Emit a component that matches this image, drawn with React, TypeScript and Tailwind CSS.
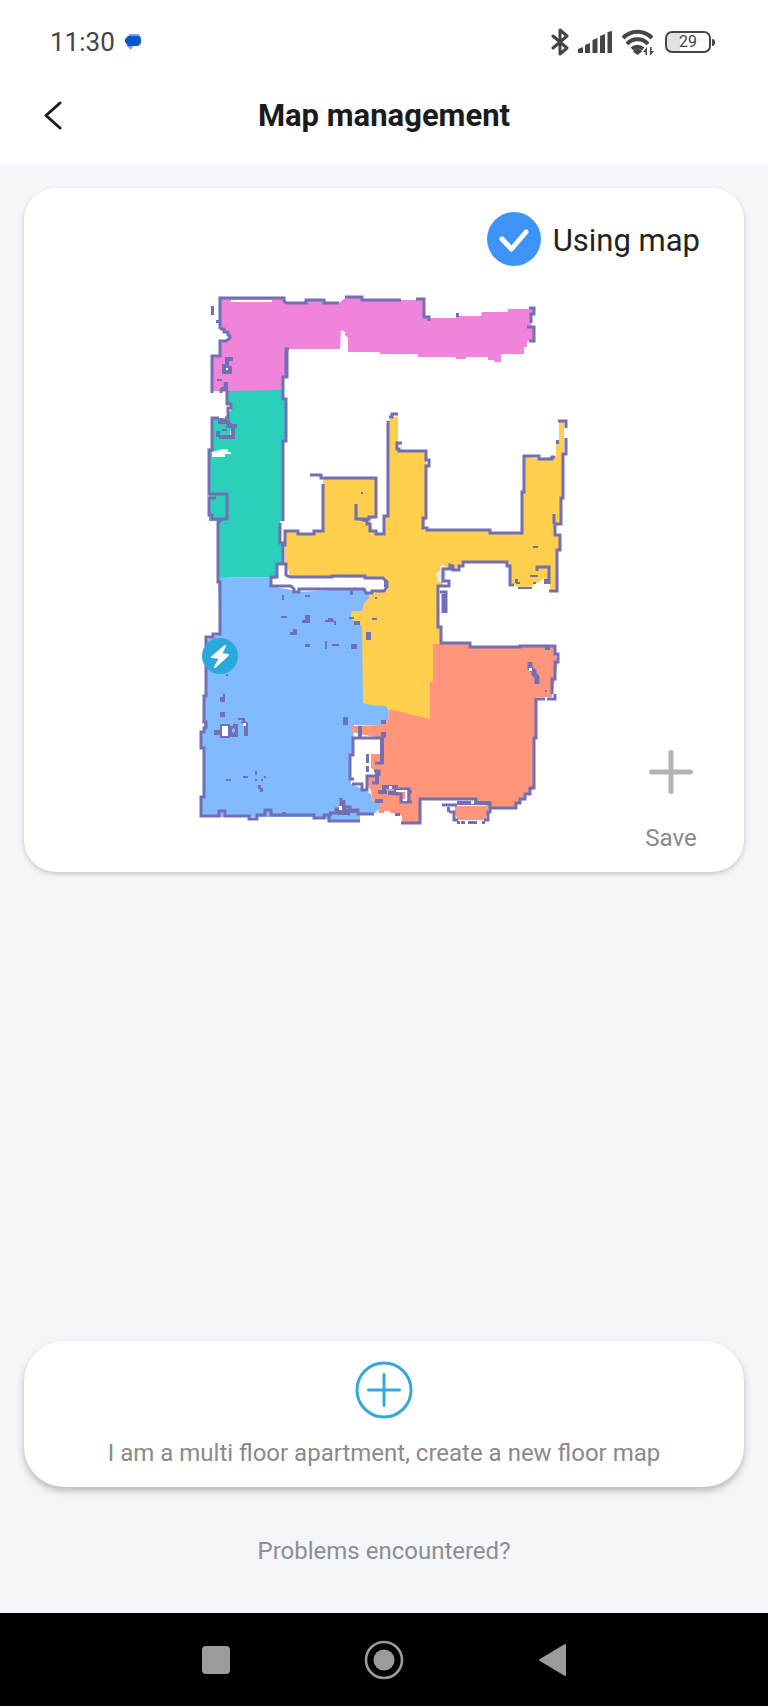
import { useState } from "react";

const WALL = "#736fb4";

// Small obstacles on the floor plan: x, y, width, height
const obstacles: number[][] = [
  // hallway
  [211, 306, 3, 9],
  [216, 320, 4, 3],
  [217, 379, 5, 2],
  [456, 313, 3, 4],
  // corridor
  [218, 420, 12, 4],
  [226, 423, 6, 5],
  [230, 424, 7, 4],
  [216, 431, 4, 6],
  [222, 429, 5, 2],
  [219, 435, 12, 4],
  // kitchen
  [361, 492, 2, 2],
  [556, 440, 3, 4],
  [533, 546, 5, 2],
  [530, 575, 8, 2],
  [533, 582, 3, 2],
  [515, 579, 3, 4],
  [516, 582, 4, 2],
  [518, 587, 14, 2],
  [544, 579, 5, 5],
  [366, 632, 5, 8],
  [372, 618, 5, 2],
  [375, 597, 2, 2],
  // living room
  [282, 595, 2, 5],
  [305, 595, 5, 2],
  [281, 616, 6, 2],
  [305, 615, 5, 7],
  [302, 620, 8, 3],
  [325, 620, 9, 2],
  [328, 618, 5, 3],
  [334, 621, 2, 4],
  [350, 591, 3, 4],
  [293, 629, 4, 5],
  [290, 632, 7, 3],
  [305, 644, 5, 3],
  [325, 641, 2, 8],
  [332, 644, 7, 2],
  [349, 617, 5, 2],
  [354, 621, 6, 4],
  [351, 644, 6, 5],
  [226, 674, 2, 2],
  [220, 697, 5, 5],
  [223, 694, 2, 3],
  [220, 712, 5, 5],
  [214, 730, 6, 5],
  [238, 718, 7, 2],
  [226, 779, 5, 2],
  [243, 776, 5, 2],
  [255, 771, 2, 4],
  [255, 779, 2, 2],
  [261, 779, 2, 2],
  [264, 776, 2, 2],
  [258, 785, 3, 4],
  [260, 788, 3, 4],
  [343, 717, 5, 8],
  [282, 812, 4, 3],
  // bedroom
  [381, 720, 5, 4],
  [381, 732, 5, 6],
  [358, 726, 4, 12],
  [366, 754, 3, 9],
  [366, 766, 3, 6],
  [375, 799, 8, 4],
  [395, 813, 5, 3],
  [545, 646, 5, 4],
  [545, 690, 2, 2],
  [447, 807, 3, 5],
  [457, 821, 3, 3],
  [461, 821, 4, 3],
  [468, 821, 9, 3],
  [482, 821, 3, 3],
];

function FloorMap() {
  return (
    <svg
      viewBox="189 290 390 564"
      className="w-full"
      role="img"
      aria-label="Floor map"
    >
      {/* rooms */}
      <path
        fill="#f083da"
        d="M220 298H284L288 303H306V301H324V303H339L345 298H362V300H424V318H456V316H481L482 312H508V309H534V315H531V326H534V341H527V347H524V354H501V362H494V360H488V357H466V359H456V357H418V354H380V352H348V338L345 335V332L341 330L340 349H287V377H283V391H212V357H220V342L228 340V332L220 329Z"
      />
      <path
        fill="#2bd0bb"
        d="M228 391L283 390V399H286V441H283V521H280V543H283V563H277V577L217 578V521H209V450H212V418H228V411H231V404H228Z"
      />
      <path
        fill="#ffcf4d"
        d="M285 531H298V534H314V531H323V478H376V517L370 520L373 531L384 536V516H388V421L393 417H398V451H426V518L424 530H490V533H522V492H524V456L539 459L556 456V441H559V421H564V455L561 524H555L556 536H560V550H557V591H550V582H544V578L538 583H533V587H518L514 585L510 583V566L505 562H463L453 571L443 566V586H438V627H441V644L433 645V682H430V720L402 714L388 709H370L355 703V622H348V612L358 608L367 594L388 590L385 578L285 577Z"
      />
      <path
        fill="#82baff"
        d="M218 578L277 577L271 586L291 588L297 592L350 589L364 589L369 595V598L364 603L362 611H352L350 618L357 623L362 626L363 703L371 705L386 706L389 711L388 720L380 725H354L352 784L364 790L371 794L373 802H380V808L374 814H360V820H329L316 817H201V798H204V749H201V733H204V698H206V640L220 634Z"
      />
      <path
        fill="#ff957a"
        d="M433 644H470V647H555V654L558 662L555 679L552 697H536V738H534V788L516 804V808H490L476 800H420V823H402V816L396 813H390V811H384V813H378L380 803L373 802L371 791L365 780L371 766V754H380V738L360 734L351 732V726L380 725L388 720L389 709L430 719V682H433Z"
      />
      <path fill="#ff957a" d="M455 806H488V813L485 820H458L455 814Z" />

      {/* unexplored gaps */}
      <g fill="#fff">
        <path d="M231 300H272V302H231Z" />
        <path d="M212 452L223 449H228V452H231V454H225V457H212Z" />
        <path d="M216 431H219V437H216ZM230 431H232V437H230ZM224 367H229V371H224Z" />
        <path d="M353 738H380V753H371V768L375 770V776H368V789H362L361 784H351V756H353Z" />
        <path d="M271 579H277V564H287L290 578H383L387 587L372 594L364 589L297 591L271 586Z" />
      </g>
      <path fill="#e9e9ec" d="M440 565L446 566V582L438 582L436 574L440 570Z" />

      {/* walls */}
      <g fill="none" stroke={WALL} strokeWidth="3">
        <path d="M286 377V349H289M220 329V298H284V301L286 303H306V300H324V303H339M345 297H362V300H401M416 299H424V317H429V321M529 308H534V314H531V323M527 327H534V341H529" />
        <path d="M220 329L224 329V332H228V335L230 336V338L226 341H220V356H212V393M221 393V390H225V383M227 390V404H231V408H228V418H225M287 349V377H283V399H286V441H283V521M280 523V543H283V563" />
        <path d="M219 418H212V450H209V494H227V519H212V515H209V498H216M222 520L218 522V582H220V634H213V637H206V696H204V722H206V728H204V732H201V748H204V797H201V816H219V811H225V816H249V819H257V815H265V810H271V815H314V818H324V815H332" />
        <path d="M310 475H321V478H376V517H369V519H356V504M360 519L367 521V524H370V531H376V534H384V516H388V421M389 417H392V414H398M323 484V531H314V534H298V531H285V545H281" />
        <path d="M402 443H397V449H399V451H426V460H429V466H426V518H423V528H427V530H490V533H522V492H524V456H539V459H552V457H555M558 421H566V428M566 438V454H563V498H561V524H555V535H560V550H557V591H549M554 514V524M549 584V567H537V571" />
        <path d="M514 585H510V566H507V562H463V566H459V570H453V566L450 565V569H443V581H449V586H438V627H441V643H470V647H520V646H555V654H558V662H555V679H552V694M547 699H555V694M545 699H536V738H534V788H530V794H525V799H520V803H516V808H490V803H476V799H420V823H401" />
        <path d="M440 592H446V613M443 613V594" />
        <path d="M271 578V586H291L294 589V592H299V589H364L366 593H372V591H384L387 587V582L383 578H365V576H332V577H290L286 575V564H277V577H271Z" />
        <path d="M383 738H353V755H350V779H354M352 784H362V790H367V776H377V783H372M375 763H383M374 771H379V776" />
        <path d="M329 813H336V809H341V798M344 800V807H350V810H358V814H374M329 814V821H360M337 814H350" />
        <path d="M395 794H401V802H412M394 789H409V801M409 792H412" />
        <path d="M442 805H457M449 812H454V820H458M490 802V812H488V820H484" />
      </g>
      <g fill="none" stroke={WALL} strokeWidth="4">
        <path d="M233 359H227V366H224V372H230V366M226 382V390M221 389H227" />
        <path d="M233 427V437H222M219 420L228 422" />
        <path d="M530 662V668L534 671V674L537 677V684" strokeWidth="5" />
        <path d="M242 721L246 724V736M233 726H236V735H231V726" />
        <path d="M382 738V764M377 772V784M378 792H387M384 791V787H396V793H388" />
        <path d="M457 803H490M336 811H358M344 806V811M386 587V580" />
      </g>
      <rect x="221" y="725" width="8" height="12" fill="#fff" stroke={WALL} strokeWidth="2" />
      <rect x="232" y="729" width="3" height="3" fill="#82baff" />
      <rect x="243" y="723" width="3" height="3" fill="#fff" />
      <rect x="529" y="668" width="3" height="3" fill="#fff" />
      <rect x="389" y="786" width="3" height="3" fill="#fff" />
      <rect x="471" y="801" width="3" height="3" fill="#fff" />
      <path d="M396 791H406V800H403" fill="none" stroke="#fff" strokeWidth="2" />
      <path d="M339 810V806H342V810Z" fill="#fff" />
      <path d="M334 815H348V818H334Z" fill="#82baff" />
      <g fill={WALL}>
        {obstacles.map(([x, y, w, h], index) => (
          <rect key={index} x={x} y={y} width={w} height={h} />
        ))}
      </g>

      {/* charging dock */}
      <circle cx="220" cy="656" r="18" fill="#2ba8dc" />
      <path
        d="M225 646L212 657L220 658L215 667L228 655L221 654Z"
        fill="#fff"
        stroke="#fff"
        strokeWidth="2"
        strokeLinejoin="round"
      />
    </svg>
  );
}

function StatusBar() {
  return (
    <div className="flex h-[84px] items-center justify-between pr-[53px] pl-[50px] text-[#454545]">
      <div className="flex items-center gap-2">
        <span className="text-[26px] leading-8">11:30</span>
        <svg width="20" height="18" viewBox="0 0 20 18" aria-hidden="true">
          <path d="M6 1h8a5 5 0 0 1 4 5v3a5 5 0 0 1-4 4h-4l-2 4-4-4Z" fill="#6ba4f5" />
          <path d="M5 3h11l2 3v4l-3 3H5L2 9V6Z" fill="#0b57d0" />
        </svg>
      </div>
      <div className="flex items-center">
        <svg width="18" height="28" viewBox="0 0 18 28" fill="none" aria-hidden="true">
          <path
            d="M2 8l14 12-7 6V2l7 6L2 20"
            stroke="currentColor"
            strokeWidth="3"
            strokeLinejoin="round"
            strokeLinecap="round"
          />
        </svg>
        <svg width="34" height="22" viewBox="0 0 34 22" className="ml-[9px]" fill="currentColor" aria-hidden="true">
          <path d="M0 18l5-2v6H0ZM7 14l5-2v10H7ZM14.500 9l5-2v15h-5ZM22 5l5-2v19h-5ZM29.500 1l4.500-1v22h-4.500Z" />
        </svg>
        <svg width="34" height="26" viewBox="0 0 34 26" className="ml-[9px]" fill="none" aria-hidden="true">
          <g stroke="currentColor" strokeWidth="4">
            <path d="M2 10a20 20 0 0 1 29 0" transform="translate(0 -1)" />
            <path d="M6 15a14 14 0 0 1 21 0" />
            <path d="M11 20a8 8 0 0 1 11 0" />
          </g>
          <path d="M12 22.500a5 5 0 0 1 9 0L16.500 26ZM22 23l4-5v8h-1.500v-3ZM33 22l-4 5v-9h1.500v4Z" fill="currentColor" />
        </svg>
        <div className="ml-[10px] flex h-[22px] w-[46px] items-center justify-center rounded-[7px] border-2 border-current bg-linear-to-r from-[#e2e2e2] from-30% to-white to-30% text-[16px] leading-4">
          29
        </div>
        <div className="ml-px h-[7px] w-[3px] rounded-r bg-current" />
      </div>
    </div>
  );
}

export default function App() {
  const [using, setUsing] = useState(true);

  return (
    <div className="flex min-h-screen flex-col bg-[#f4f6fa] font-['Roboto',sans-serif]">
      <header className="bg-white pb-4">
        <StatusBar />
        <div className="grid h-16 grid-cols-[1fr_auto_1fr] items-center">
          <button type="button" aria-label="Back" className="ml-10 w-7 cursor-pointer">
            <svg width="28" height="30" viewBox="0 0 28 30" fill="none" aria-hidden="true">
              <path
                d="M20 2L6 14.500L20 27"
                stroke="#1b1b1b"
                strokeWidth="3"
                strokeLinecap="round"
                strokeLinejoin="round"
              />
            </svg>
          </button>
          <h1 className="text-[31px] leading-9 font-bold text-[#1b1b1b]">
            Map management
          </h1>
        </div>
      </header>

      <main className="flex flex-1 flex-col px-6 pt-6">
        <section className="rounded-[32px] bg-white pt-6 pb-[18px] shadow-[0_2px_5px_rgba(0,0,0,0.2)]">
          <label className="mr-11 ml-auto flex w-fit cursor-pointer items-center gap-3 text-[31px] leading-9 text-[#222]">
            <span className="grid size-[54px]">
              <input
                type="checkbox"
                checked={using}
                onChange={() => setUsing(!using)}
                className="peer col-start-1 row-start-1 size-full appearance-none rounded-full bg-gray-300 checked:bg-[#3e93f8]"
              />
              <svg
                viewBox="0 0 54 54"
                fill="none"
                className="pointer-events-none invisible col-start-1 row-start-1 peer-checked:visible"
                aria-hidden="true"
              >
                <path
                  d="M15 27L24.500 37L39 20"
                  stroke="#fff"
                  strokeWidth="5"
                  strokeLinecap="round"
                  strokeLinejoin="round"
                />
              </svg>
            </span>
            <span className="pt-1">Using map</span>
          </label>

          <div className="mt-6 grid grid-cols-[1fr_390px_1fr]">
            <div className="col-start-2">
              <FloorMap />
            </div>
            <button
              type="button"
              className="flex w-[146px] cursor-pointer flex-col items-center gap-8 self-end justify-self-end pb-1 text-2xl leading-6 text-[#8a8a8a]"
            >
              <svg width="44" height="44" viewBox="0 0 44 44" aria-hidden="true">
                <path
                  d="M22 2.500V41.500M2.500 22H41.500"
                  stroke="#b3b3b3"
                  strokeWidth="5"
                  strokeLinecap="round"
                />
              </svg>
              Save
            </button>
          </div>
        </section>

        <button
          type="button"
          className="mt-auto flex cursor-pointer flex-col items-center gap-5 rounded-[40px] bg-white pt-5 pb-5 text-2xl text-[#8a8a8a] shadow-[0_4px_7px_rgba(0,0,0,0.25)]"
        >
          <svg width="58" height="58" viewBox="0 0 58 58" fill="none" stroke="#36a9da" aria-hidden="true">
            <circle cx="29" cy="29" r="27" strokeWidth="3" />
            <path d="M29 13.500V44.500M13.500 29H44.500" strokeWidth="3" strokeLinecap="round" />
          </svg>
          <span className="leading-7">
            I am a multi floor apartment, create a new floor map
          </span>
        </button>
        <a href="#help" className="mx-auto mt-[50px] mb-12 text-2xl leading-7 text-[#8c8e92]">
          Problems encountered?
        </a>
      </main>

      <nav className="flex h-[93px] items-center justify-center gap-[130px] bg-black text-[#9b9b9b]">
        <button type="button" aria-label="Recent apps" className="cursor-pointer">
          <svg width="36" height="40" viewBox="0 0 36 40" fill="currentColor" aria-hidden="true">
            <rect x="4" y="6" width="28" height="28" rx="4" />
          </svg>
        </button>
        <button type="button" aria-label="Home" className="cursor-pointer">
          <svg width="40" height="40" viewBox="0 0 40 40" fill="none" stroke="currentColor" aria-hidden="true">
            <circle cx="20" cy="20" r="18" strokeWidth="2.600" />
            <circle cx="20" cy="20" r="10.500" fill="currentColor" stroke="none" />
          </svg>
        </button>
        <button type="button" aria-label="Back to previous app" className="cursor-pointer">
          <svg width="36" height="40" viewBox="0 0 36 40" fill="currentColor" aria-hidden="true">
            <path d="M31 5V35L6 20Z" stroke="currentColor" strokeWidth="2" strokeLinejoin="round" />
          </svg>
        </button>
      </nav>
    </div>
  );
}
